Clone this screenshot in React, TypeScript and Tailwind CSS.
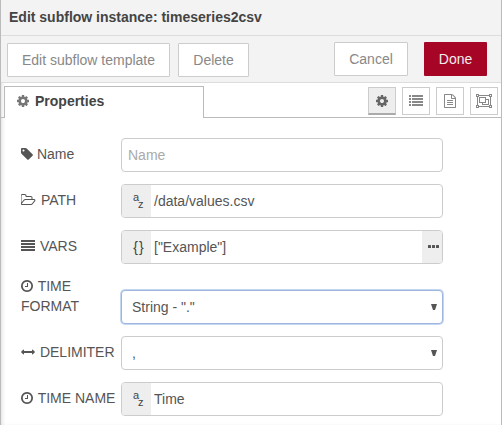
import type { ReactNode } from 'react';

type IconName = 'cog' | 'tag' | 'folder' | 'clock' | 'arrows' | 'justify' | 'list' | 'file' | 'group' | 'dots';

const icons: Record<IconName, { box: string; w: number; d: string }> = {
  cog: {
    box: '128 0 1536 1792',
    w: 12,
    d: 'M1152 896q0-106-75-181t-181-75-181 75-75 181 75 181 181 75 181-75 75-181zm512-109v222q0 12-8 23t-20 13l-185 28q-19 54-39 91 35 50 107 138 10 12 10 25t-9 23q-27 37-99 108t-94 71q-12 0-26-9l-138-108q-44 23-91 38-16 136-29 186-7 28-36 28h-222q-14 0-24.5-8.5t-11.5-21.5l-28-184q-49-16-90-37l-141 107q-10 9-25 9-14 0-25-11-126-114-165-168-7-10-7-23 0-12 8-23 15-21 51-66.5t54-70.5q-27-50-41-99l-183-27q-13-2-21-12.5t-8-23.5v-222q0-12 8-23t19-13l186-28q14-46 39-92-40-57-107-138-10-12-10-24 0-10 9-23 26-36 98.5-107.5t94.5-71.5q13 0 26 10l138 107q44-23 91-38 16-136 29-186 7-28 36-28h222q14 0 24.5 8.5t11.5 21.5l28 184q49 16 90 37l142-107q9-9 24-9 13 0 25 10 129 119 165 170 7 8 7 22 0 12-8 23-15 21-51 66.5t-54 70.5q26 50 41 98l183 28q13 2 21 12.5t8 23.5z',
  },
  tag: {
    box: '128 0 1536 1792',
    w: 12,
    d: 'M576 448q0-53-37.5-90.5t-90.5-37.5-90.5 37.5-37.5 90.5 37.5 90.5 90.5 37.5 90.5-37.5 37.5-90.5zm1067 576q0 53-37 90l-491 492q-39 37-91 37-53 0-90-37l-715-716q-38-37-64.5-101t-26.5-117v-416q0-52 38-90t90-38h416q53 0 117 26.5t102 64.5l715 714q37 39 37 91z',
  },
  folder: {
    box: '0 0 1920 1792',
    w: 15,
    d: 'M1717 931q0-35-53-35h-1088q-40 0-85.5 21.5t-71.5 52.5l-294 363q-18 24-18 40 0 35 53 35h1088q40 0 86-22t71-53l294-363q18-22 18-39zm-1141-163h768v-160q0-40-28-68t-68-28h-576q-40 0-68-28t-28-68v-64q0-40-28-68t-68-28h-320q-40 0-68 28t-28 68v853l256-315q44-53 116-87.5t140-34.5zm1269 163q0 62-46 120l-295 363q-43 53-116 87.5t-140 34.5h-1088q-92 0-158-66t-66-158v-960q0-92 66-158t158-66h320q92 0 158 66t66 158v32h544q92 0 158 66t66 158v160h192q54 0 99 24.5t67 70.5q15 32 15 68z',
  },
  clock: {
    box: '128 0 1536 1792',
    w: 12,
    d: 'M1024 544v448q0 14-9 23t-23 9h-320q-14 0-23-9t-9-23v-64q0-14 9-23t23-9h224v-352q0-14 9-23t23-9h64q14 0 23 9t9 23zm416 352q0-148-73-273t-198-198-273-73-273 73-198 198-73 273 73 273 198 198 273 73 273-73 198-198 73-273zm224 0q0 209-103 385.5t-279.5 279.5-385.5 103-385.5-103-279.5-279.5-103-385.5 103-385.5 279.5-279.5 385.5-103 385.5 103 279.5 279.5 103 385.5z',
  },
  arrows: {
    box: '0 0 1792 1792',
    w: 14,
    d: 'M1792 896q0 26-19 45l-256 256q-19 19-45 19t-45-19-19-45v-128h-1024v128q0 26-19 45t-45 19-45-19l-256-256q-19-19-19-45t19-45l256-256q19-19 45-19t45 19 19 45v128h1024v-128q0-26 19-45t45-19 45 19l256 256q19 19 19 45z',
  },
  justify: {
    box: '0 0 14 14',
    w: 14,
    d: 'M0 1h14v2H0zM0 4h14v2H0zM0 7h14v2H0zM0 10h14v2H0z',
  },
  list: {
    box: '0 0 14 14',
    w: 14,
    d: 'M0 1h2v2H0zM3 1h11v2H3zM0 4h2v2H0zM3 4h11v2H3zM0 7h2v2H0zM3 7h11v2H3zM0 10h2v2H0zM3 10h11v2H3z',
  },
  file: {
    box: '128 0 1536 1792',
    w: 12,
    d: 'M1596 380q28 28 48 76t20 88v1152q0 40-28 68t-68 28h-1344q-40 0-68-28t-28-68v-1600q0-40 28-68t68-28h896q40 0 88 20t76 48zm-444-244v376h376q-10-29-22-41l-313-313q-12-12-41-22zm384 1528v-1024h-416q-40 0-68-28t-28-68v-416h-768v1536h1280zm-1024-864q0-14 9-23t23-9h704q14 0 23 9t9 23v64q0 14-9 23t-23 9h-704q-14 0-23-9t-9-23v-64zm736 224q14 0 23 9t9 23v64q0 14-9 23t-23 9h-704q-14 0-23-9t-9-23v-64q0-14 9-23t23-9h704zm0 256q14 0 23 9t9 23v64q0 14-9 23t-23 9h-704q-14 0-23-9t-9-23v-64q0-14 9-23t23-9h704z',
  },
  group: {
    box: '0 0 16 14',
    w: 16,
    d: 'M0 0h3v1h10V0h3v3h-1v8h1v3h-3v-1H3v1H0v-3h1V3H0zM1 1v1h1V1zM14 1v1h1V1zM1 12v1h1v-1zM14 12v1h1v-1zM3 2v1H2v8h1v1h10v-1h1V3h-1V2zM3 3h7v2h3v6H6V9H3zM4 4v4h5V4zM10 6v3H7v1h5V6z',
  },
  dots: {
    box: '0 0 11 14',
    w: 11,
    d: 'M.5 5h2q.5 0 .5.5v2q0 .5-.5.5h-2Q0 8 0 7.500V5.500Q0 5 .5 5zM4.500 5h2q.5 0 .5.5v2q0 .5-.5.5h-2Q4 8 4 7.500V5.500Q4 5 4.500 5zM8.500 5h2q.5 0 .5.5v2q0 .5-.5.5h-2Q8 8 8 7.500V5.500Q8 5 8.500 5z',
  },
};

function Icon({ name, className = '' }: { name: IconName; className?: string }) {
  const icon = icons[name];
  return (
    <svg viewBox={icon.box} width={icon.w} height={14} fill="currentColor" fillRule={name === 'group' ? 'evenodd' : 'nonzero'} className={`inline-block shrink-0 ${className}`}>
      <path d={icon.d} />
    </svg>
  );
}

function Row({ icon, label, children, tall = false }: { icon: IconName; label: string; children: ReactNode; tall?: boolean }) {
  return (
    <div className={tall ? 'flex h-12 items-end' : 'flex h-[34px] items-center'}>
      <label className={`w-[100px] shrink-0 leading-5 ${tall ? 'mb-2' : 'mb-0.5 whitespace-nowrap'}`}>
        <Icon name={icon} className={icon === 'tag' ? 'align-[-2px]' : 'mr-px align-[-2px]'} /> {label}
      </label>
      {children}
    </div>
  );
}

const field = 'flex h-[34px] w-[322px] shrink-0 items-center overflow-hidden rounded-[4px] border bg-white';

function StringType() {
  return (
    <span className="flex h-full w-[29px] shrink-0 items-center justify-center bg-[#eee] pl-[5px]">
      <svg width="12" height="18" fill="#444" fontFamily="Liberation Sans, sans-serif" fontSize="11">
        <text x="0" y="8.500">a</text>
        <text x="5" y="16">z</text>
      </svg>
    </span>
  );
}

function Select({ value, focused = false }: { value: string; focused?: boolean }) {
  return (
    <div className={`${field} justify-between pr-[5px] pl-2.5 ${focused ? 'border-[#9db5df] shadow-[0_0_0_1px_#c5d6f3]' : 'border-[#ccc]'}`}>
      <span>{value}</span>
      <svg width="6" height="6" fill="#555"><path d="M0 0h6L4 6H2z" /></svg>
    </div>
  );
}

const tool = 'flex size-7 items-center justify-center border border-[#ccc] text-[#888]';

export default function App() {
  return (
    <div className="h-[425px] w-[502px] overflow-hidden border-x border-[#bbb] bg-white font-['Liberation_Sans',Arial,sans-serif] text-sm leading-5 text-[#555] shadow-[inset_3px_0_4px_-2px_#ddd]">
      <header className="flex h-9 items-center border-b border-[#ddd] bg-[#f3f3f3] pb-px pl-2 font-bold text-[#444]">
        Edit subflow instance: timeseries2csv
      </header>
      <div className="flex h-[47px] items-start border-b border-[#ddd] bg-[#f3f3f3] pt-1.5 pl-1.5 text-[#888]">
        <button className="mt-px mr-2 h-[34px] w-[163px] rounded-[1px] border border-[#ccc] bg-white">Edit subflow template</button>
        <button className="mt-px h-[34px] w-[71px] rounded-[1px] border border-[#ccc] bg-white">Delete</button>
        <button className="mr-4 ml-auto h-[34px] w-[74px] rounded-[1px] border border-[#ccc] bg-white">Cancel</button>
        <button className="mr-[14px] h-[34px] w-[63px] rounded-[1px] bg-[#a60525] text-[#eee]">Done</button>
      </div>
      <div className="flex h-[35px] items-end">
        <div className="h-px w-[3px] bg-[#bbb]" />
        <div className="flex h-8 w-[200px] items-center border-x border-t border-[#bbb] pb-[3px] pl-3 font-bold text-[#444]">
          <Icon name="cog" className="mr-1.5 text-[#777]" />
          Properties
        </div>
        <div className="flex h-full flex-1 items-start justify-end gap-1.5 border-b border-[#bbb] pt-1 pr-[3px]">
          <button className="flex size-7 items-center justify-center border border-b-2 border-[#ccc] border-b-[#aaa] bg-[#eee] text-[#666]"><Icon name="cog" /></button>
          <button className={tool}><Icon name="list" /></button>
          <button className={tool}><Icon name="file" /></button>
          <button className={tool}><Icon name="group" /></button>
        </div>
      </div>
      <form className="flex flex-col gap-3 pt-5 pl-5">
        <Row icon="tag" label="Name">
          <div className={`${field} border-[#ccc] px-1.5`}>
            <input placeholder="Name" className="w-full outline-none placeholder:text-[#aaa]" />
          </div>
        </Row>
        <Row icon="folder" label="PATH">
          <div className={`${field} border-[#ccc]`}>
            <StringType />
            <span className="pl-[3px]">/data/values.csv</span>
          </div>
        </Row>
        <Row icon="justify" label="VARS">
          <div className={`${field} border-[#ccc]`}>
            <span className="flex h-full w-[29px] shrink-0 items-center justify-center gap-px bg-[#eee] pl-1 text-[#444]">
              <span>{'{'}</span><span>{'}'}</span>
            </span>
            <span className="pl-[3px]">["Example"]</span>
            <span className="ml-auto flex h-full w-5 items-center justify-center bg-[#eee] pl-[3px]"><Icon name="dots" /></span>
          </div>
        </Row>
        <Row icon="clock" label="TIME FORMAT" tall>
          <Select value={'String - "."'} focused />
        </Row>
        <Row icon="arrows" label="DELIMITER">
          <Select value="," />
        </Row>
        <Row icon="clock" label="TIME NAME">
          <div className={`${field} border-[#ccc]`}>
            <StringType />
            <span className="pl-[3px]">Time</span>
          </div>
        </Row>
      </form>
    </div>
  );
}
